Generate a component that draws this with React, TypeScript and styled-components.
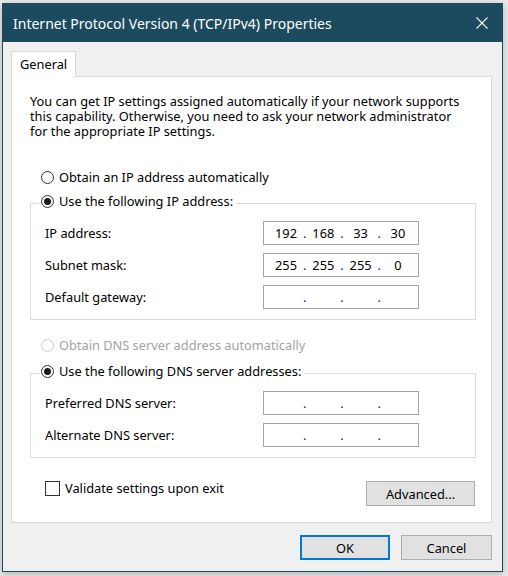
import React from 'react';
import styled, { createGlobalStyle } from 'styled-components';

const GlobalStyle = createGlobalStyle`
  html, body {
    margin: 0;
    padding: 0;
  }
  body {
    background: #ebebeb;
    font-family: 'Noto Sans', 'Segoe UI', sans-serif;
    font-size: 12.8px;
    color: #000;
  }
`;

const Desktop = styled.div`
  width: 508px;
  height: 576px;
  box-sizing: border-box;
  padding: 3px 0 0 2px;
  overflow: hidden;
`;

const Window = styled.div`
  width: 501px;
  height: 569px;
  box-sizing: border-box;
  border: 1px solid #1c4a5e;
  background: #f0f0f0;
  box-shadow: 0 2px 8px rgba(0, 0, 0, 0.25);
  display: flex;
  flex-direction: column;
`;

const TitleBar = styled.div`
  height: 38px;
  flex: none;
  background: #1c4a5e;
  color: #fff;
  font-size: 14px;
  display: flex;
  align-items: center;
  justify-content: space-between;
  padding: 0 14px 0 10px;
`;

const CloseIcon = () => (
  <svg width="12" height="12" viewBox="0 0 12 12">
    <path d="M0.5 0.5 L11.5 11.5 M11.5 0.5 L0.5 11.5" stroke="#fff" strokeWidth="1.1" />
  </svg>
);

const Body = styled.div`
  flex: 1;
  display: flex;
  flex-direction: column;
  padding: 9px 10px 0 8px;
`;

const TabStrip = styled.div`
  display: flex;
`;

const Tab = styled.div`
  width: 65px;
  height: 26px;
  box-sizing: border-box;
  border: 1px solid #d9d9d9;
  border-bottom: none;
  background: #fff;
  margin-bottom: -1px;
  position: relative;
  z-index: 1;
  padding: 3px 0 0 8px;
`;

const Panel = styled.div`
  height: 447px;
  box-sizing: border-box;
  border: 1px solid #d9d9d9;
  background: #fff;
  padding: 17px 14px 0 18px;
  display: flex;
  flex-direction: column;
`;

const Intro = styled.p`
  margin: 0;
  line-height: 15px;
`;

const RadioRow = styled.label<{ disabled?: boolean; top?: number }>`
  display: flex;
  align-items: center;
  gap: 5px;
  height: 16px;
  margin-left: 11px;
  margin-top: ${p => p.top ?? 0}px;
  color: ${p => (p.disabled ? '#a3a3a3' : '#000')};
`;

const RadioCircle = styled.span<{ checked?: boolean; disabled?: boolean }>`
  width: 13px;
  height: 13px;
  box-sizing: border-box;
  border-radius: 50%;
  border: 1px solid ${p => (p.disabled ? '#cccccc' : '#333')};
  display: flex;
  align-items: center;
  justify-content: center;
  flex: none;
  &::after {
    content: '';
    width: 7px;
    height: 7px;
    border-radius: 50%;
    background: #1a1a1a;
    display: ${p => (p.checked ? 'block' : 'none')};
  }
`;

const Group = styled.fieldset<{ top: number }>`
  margin: ${p => p.top}px 0 0 0;
  width: 446px;
  box-sizing: border-box;
  border: 1px solid #dcdcdc;
  padding: 8px 0 10px 14px;
  min-inline-size: 0;
`;

const Legend = styled.legend`
  margin-left: -6px;
  padding: 0 3px 4px 2px;
  height: 20px;
  box-sizing: border-box;
  display: flex;
  align-items: flex-start;
`;

const LegendInner = styled.span`
  display: flex;
  align-items: center;
  gap: 5px;
  height: 16px;
`;

const Rows = styled.div`
  display: grid;
  grid-template-columns: 218px 156px;
  row-gap: 8px;
  align-items: center;
`;

const FieldLabel = styled.span`
  line-height: 24px;
`;

const IpBox = styled.div`
  height: 24px;
  box-sizing: border-box;
  border: 1px solid #a3a3a3;
  background: #fff;
  display: flex;
  align-items: center;
  padding-left: 7px;
`;

const Octet = styled.span`
  width: 30px;
  text-align: center;
`;

const Dot = styled.span`
  width: 7.3px;
  text-align: center;
  color: #1b1b5a;
`;

const BottomRow = styled.div`
  margin-top: 22px;
  display: flex;
  align-items: flex-start;
  justify-content: space-between;
  padding-left: 15px;
  padding-right: 2px;
`;

const CheckLabel = styled.label`
  display: flex;
  align-items: center;
  gap: 5px;
  height: 16px;
`;

const CheckBox = styled.span`
  width: 15px;
  height: 15px;
  box-sizing: border-box;
  border: 1px solid #333;
  background: #fff;
`;

const Button = styled.button<{ width: number; primary?: boolean }>`
  width: ${p => p.width}px;
  height: 25px;
  box-sizing: border-box;
  background: #e1e1e1;
  border: ${p => (p.primary ? '2px solid #0078d7' : '1px solid #adadad')};
  font-family: inherit;
  font-size: 12.8px;
  color: #000;
  padding: 0;
`;

const AdvancedButton = styled(Button)`
  margin-top: 1px;
`;

const Footer = styled.div`
  display: flex;
  justify-content: flex-end;
  gap: 11px;
  margin-top: 12px;
`;

const IpField = ({ value }: { value?: string[] }) => {
  const parts = value ?? ['', '', '', ''];
  return (
    <IpBox>
      {parts.map((part, i) => (
        <React.Fragment key={i}>
          {i > 0 && <Dot>.</Dot>}
          <Octet>{part}</Octet>
        </React.Fragment>
      ))}
    </IpBox>
  );
};

const App = () => (
  <>
    <GlobalStyle />
    <Desktop>
      <Window>
        <TitleBar>
          <span>Internet Protocol Version 4 (TCP/IPv4) Properties</span>
          <CloseIcon />
        </TitleBar>
        <Body>
          <TabStrip>
            <Tab>General</Tab>
          </TabStrip>
          <Panel>
            <Intro>
              You can get IP settings assigned automatically if your network supports
              <br />
              this capability. Otherwise, you need to ask your network administrator
              <br />
              for the appropriate IP settings.
            </Intro>

            <RadioRow top={30}>
              <RadioCircle />
              Obtain an IP address automatically
            </RadioRow>

            <Group top={8}>
              <Legend>
                <LegendInner>
                  <RadioCircle checked />
                  Use the following IP address:
                </LegendInner>
              </Legend>
              <Rows>
                <FieldLabel>IP address:</FieldLabel>
                <IpField value={['192', '168', '33', '30']} />
                <FieldLabel>Subnet mask:</FieldLabel>
                <IpField value={['255', '255', '255', '0']} />
                <FieldLabel>Default gateway:</FieldLabel>
                <IpField />
              </Rows>
            </Group>

            <RadioRow top={17} disabled>
              <RadioCircle disabled />
              Obtain DNS server address automatically
            </RadioRow>

            <Group top={10}>
              <Legend>
                <LegendInner>
                  <RadioCircle checked />
                  Use the following DNS server addresses:
                </LegendInner>
              </Legend>
              <Rows>
                <FieldLabel>Preferred DNS server:</FieldLabel>
                <IpField />
                <FieldLabel>Alternate DNS server:</FieldLabel>
                <IpField />
              </Rows>
            </Group>

            <BottomRow>
              <CheckLabel>
                <CheckBox />
                Validate settings upon exit
              </CheckLabel>
              <AdvancedButton width={109}>Advanced...</AdvancedButton>
            </BottomRow>
          </Panel>
          <Footer>
            <Button width={90} primary>
              OK
            </Button>
            <Button width={91}>Cancel</Button>
          </Footer>
        </Body>
      </Window>
    </Desktop>
  </>
);

export default App;
